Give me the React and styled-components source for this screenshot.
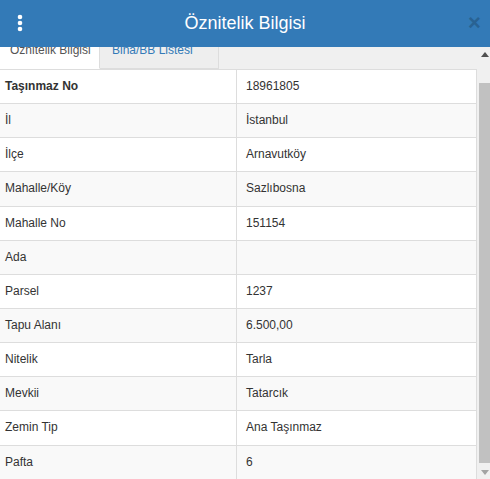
import React from 'react';
import styled, { createGlobalStyle } from 'styled-components';

const rows = [
  ['Taşınmaz No', '18961805'],
  ['İl', 'İstanbul'],
  ['İlçe', 'Arnavutköy'],
  ['Mahalle/Köy', 'Sazlıbosna'],
  ['Mahalle No', '151154'],
  ['Ada', ''],
  ['Parsel', '1237'],
  ['Tapu Alanı', '6.500,00'],
  ['Nitelik', 'Tarla'],
  ['Mevkii', 'Tatarcık'],
  ['Zemin Tip', 'Ana Taşınmaz'],
  ['Pafta', '6'],
];

const GlobalStyle = createGlobalStyle`
  html, body {
    margin: 0;
    padding: 0;
    background: #fff;
  }
  body {
    font-family: "Liberation Sans", Arial, sans-serif;
    color: #333;
  }
`;

const App = () => (
  <>
    <GlobalStyle />
    <Panel>
      <Header>
        <MenuButton type="button" aria-label="menu">
          <svg width="6" height="18" viewBox="0 0 6 18">
            <circle cx="3" cy="3" r="2.3" fill="#fff" />
            <circle cx="3" cy="9" r="2.3" fill="#fff" />
            <circle cx="3" cy="15" r="2.3" fill="#fff" />
          </svg>
        </MenuButton>
        <Title>Öznitelik Bilgisi</Title>
        <Close type="button">×</Close>
      </Header>
      <Body>
        <Content>
          <TabStrip>
            <Tab active>Öznitelik Bilgisi</Tab>
            <Tab>Bina/BB Listesi</Tab>
            <TabFill />
          </TabStrip>
          <Table>
            <tbody>
              {rows.map(([label, value], i) => (
                <Row key={label}>
                  <Label bold={i === 0}>{label}</Label>
                  <Value>{value}</Value>
                </Row>
              ))}
            </tbody>
          </Table>
        </Content>
        <ScrollBar>
          <Arrow>
            <svg width="8" height="5" viewBox="0 0 8 5">
              <path d="M0 5 L4 0 L8 5 Z" fill="#505050" />
            </svg>
          </Arrow>
          <Track>
            <Thumb />
          </Track>
          <Arrow>
            <svg width="8" height="5" viewBox="0 0 8 5">
              <path d="M0 0 L8 0 L4 5 Z" fill="#a3a3a3" />
            </svg>
          </Arrow>
        </ScrollBar>
      </Body>
    </Panel>
  </>
);

export default App;

const Panel = styled.div`
  width: 490px;
  height: 479px;
  display: flex;
  flex-direction: column;
  overflow: hidden;
`;

const Header = styled.div`
  position: relative;
  z-index: 1;
  height: 47px;
  flex: none;
  background-color: #337ab7;
  display: flex;
  align-items: center;
`;

const MenuButton = styled.button`
  width: 40px;
  height: 47px;
  padding: 0;
  border: none;
  background: transparent;
  display: flex;
  align-items: center;
  justify-content: center;
  margin-top: -2px;
`;

const Title = styled.div`
  flex: 1;
  text-align: center;
  color: #fff;
  font-size: 18px;
  line-height: 20px;
  margin-top: -2px;
`;

const Close = styled.button`
  width: 40px;
  height: 47px;
  padding: 0 0 0 9px;
  border: none;
  background: transparent;
  color: #296292;
  font-family: "Liberation Sans", Arial, sans-serif;
  font-weight: bold;
  font-size: 22px;
  line-height: 20px;
  margin-top: -1px;
`;

const Body = styled.div`
  flex: 1;
  display: flex;
  background-color: #f0f0f0;
  overflow: hidden;
`;

const Content = styled.div`
  width: 477px;
  flex: none;
`;

const TabStrip = styled.div`
  display: flex;
  height: 38px;
  margin-top: -16px;
`;

const Tab = styled.div`
  height: 37px;
  padding: 0 ${(p) => (p.active ? '9px 0 10px' : '12px')};
  font-size: 12px;
  line-height: 39px;
  white-space: nowrap;
  color: ${(p) => (p.active ? '#555' : '#337ab7')};
  background-color: ${(p) => (p.active ? '#fff' : '#eee')};
  border-right: 1px solid #ddd;
  border-bottom: 1px solid ${(p) => (p.active ? '#fff' : '#ddd')};
  width: ${(p) => (p.active ? '80px' : '94px')};
`;

const TabFill = styled.div`
  flex: 1;
`;

const Table = styled.table`
  width: 477px;
  border-collapse: collapse;
  table-layout: fixed;
  background-color: #fff;
  font-size: 12px;
  line-height: 1.42857;
`;

const Row = styled.tr`
  &:nth-child(even) {
    background-color: #f9f9f9;
  }
`;

const Label = styled.td`
  width: 223px;
  padding: 8px 8px 8px 5px;
  border-top: 1px solid #ddd;
  border-right: 1px solid #ddd;
  font-weight: ${(p) => (p.bold ? 'bold' : 'normal')};
  color: #333;
`;

const Value = styled.td`
  padding: 8px 8px 8px 9px;
  border-top: 1px solid #ddd;
  border-right: 1px solid #ddd;
  color: #333;
`;

const ScrollBar = styled.div`
  width: 11px;
  margin-left: 2px;
  display: flex;
  flex-direction: column;
  background-color: #f0f0f0;
`;

const Arrow = styled.div`
  height: 14px;
  flex: none;
  display: flex;
  align-items: center;
  justify-content: center;
`;

const Track = styled.div`
  flex: 1;
  padding-top: 22px;
  padding-bottom: 2px;
  display: flex;
  flex-direction: column;
`;

const Thumb = styled.div`
  flex: 1;
  background-color: #c1c1c1;
`;
